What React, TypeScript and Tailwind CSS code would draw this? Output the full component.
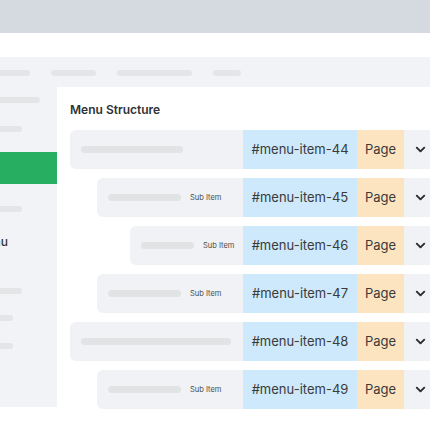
import { ChevronDown } from "lucide-react";

const rows = [
  { id: 44, indent: 0, pill: 102, sub: false },
  { id: 45, indent: 27, pill: 73, sub: true },
  { id: 46, indent: 60, pill: 53, sub: true },
  { id: 47, indent: 27, pill: 73, sub: true },
  { id: 48, indent: 0, pill: 150, sub: false },
  { id: 49, indent: 27, pill: 73, sub: true },
];

function Pill({ className }: { className: string }) {
  return <div className={`h-[6px] rounded-full bg-[#e3e5e7] ${className}`} />;
}

function MenuRow({ id, indent, pill, sub }: (typeof rows)[number]) {
  return (
    <div className="flex h-[39px] shrink-0" style={{ marginLeft: indent }}>
      <div className="flex items-center gap-[9px] rounded-l-[6px] bg-[#f1f2f5] px-[11px]" style={{ width: 173 - indent }}>
        <div className="h-[7px] shrink-0 rounded-full bg-[#e1e3e4]" style={{ width: pill }} />
        {sub && <span className="whitespace-nowrap text-[7.5px] text-[#4a4a4a]">Sub Item</span>}
      </div>
      <div className="flex w-[114px] items-center justify-center bg-[#cde9fb] text-[13px] text-[#3a3a3a]">
        #menu-item-{id}
      </div>
      <div className="flex w-[47px] items-center justify-center bg-[#fde4c0] text-[13px] text-[#3a3a3a]">
        Page
      </div>
      <div className="flex w-[60px] items-center bg-[#f1f2f5] pl-[9px] text-[#2b2b2b]">
        <ChevronDown size={15} strokeWidth={3} />
      </div>
    </div>
  );
}

export default function App() {
  return (
    <div className="relative h-[430px] w-[430px] overflow-hidden bg-white font-['Inter',sans-serif]">
      <div className="h-[33px] bg-[#d5d9e0]" />
      <div className="h-[24px] bg-white" />
      <div className="flex h-[350px] flex-col bg-[#f1f3f6]">
        <div className="flex h-[30px] shrink-0 items-center gap-[21px] pt-[2px]">
          <Pill className="-ml-[20px] w-[50px]" />
          <Pill className="w-[45px]" />
          <Pill className="w-[75px]" />
          <Pill className="w-[28px]" />
        </div>
        <div className="flex min-h-0 flex-1">
          <div className="w-[57px] shrink-0 overflow-hidden pt-[10px]">
            <Pill className="-ml-[30px] w-[70px]" />
            <Pill className="-ml-[30px] mt-[23px] w-[52px]" />
            <div className="mt-[20px] h-[32px] bg-[#27ae60]" />
            <Pill className="-ml-[30px] mt-[22px] w-[52px]" />
            <div className="-ml-[40px] mt-[22px] w-[48px] text-right text-[12px] font-medium leading-[16px] text-[#333]">
              Menu
            </div>
            <Pill className="-ml-[30px] mt-[38px] w-[52px]" />
            <Pill className="-ml-[30px] mt-[21px] w-[43px]" />
            <Pill className="-ml-[30px] mt-[22px] w-[43px]" />
          </div>
          <div className="flex-1 bg-white pl-[13px] pt-[15px]">
            <div className="text-[12px] font-semibold leading-[16px] text-[#2e3236]">Menu Structure</div>
            <div className="mt-[12px] flex flex-col gap-[9px]">
              {rows.map((r) => (
                <MenuRow key={r.id} {...r} />
              ))}
            </div>
          </div>
        </div>
      </div>
    </div>
  );
}
